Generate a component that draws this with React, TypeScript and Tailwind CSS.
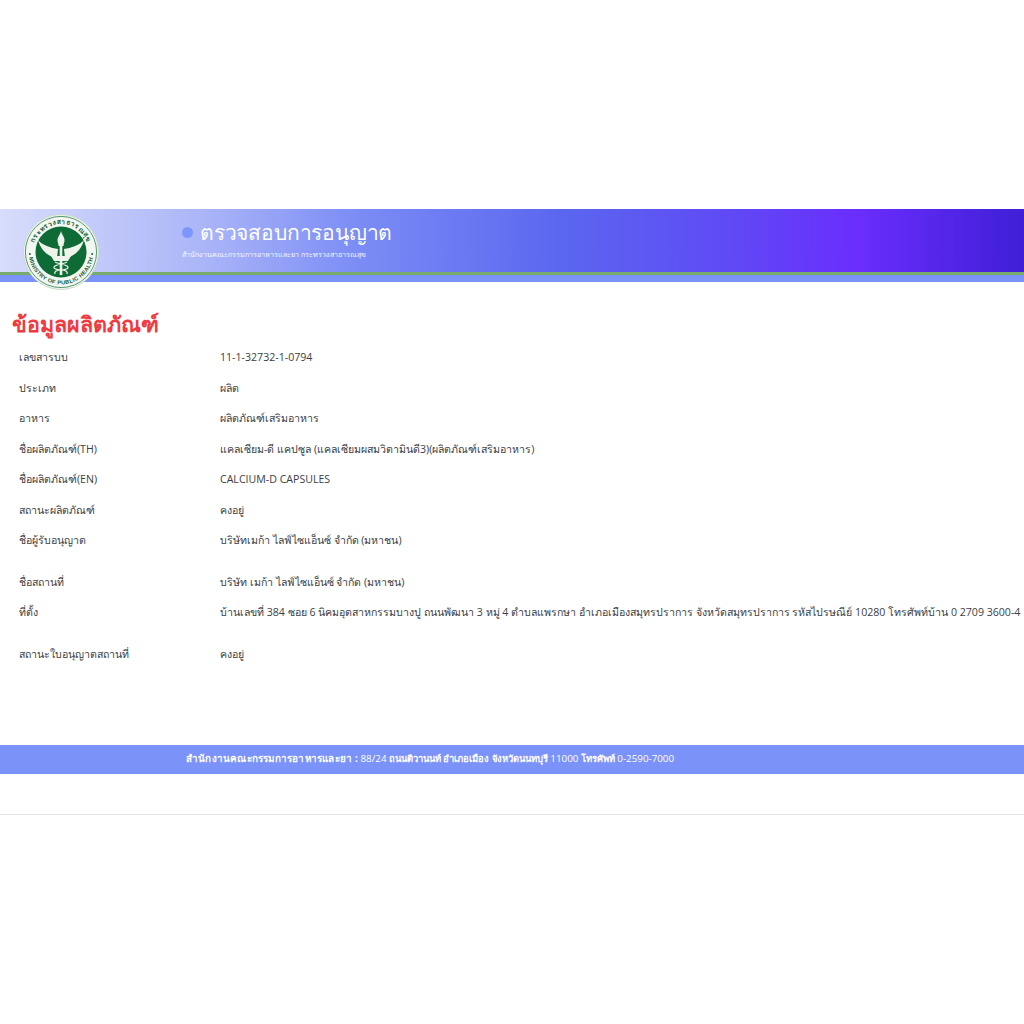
const bodyFont = "font-['Open_Sans','Noto_Sans','Liberation_Sans',sans-serif]";

const productRows = [
  ["เลขสารบบ", "11-1-32732-1-0794"],
  ["ประเภท", "ผลิต"],
  ["อาหาร", "ผลิตภัณฑ์เสริมอาหาร"],
  ["ชื่อผลิตภัณฑ์(TH)", "แคลเซียม-ดี แคปซูล (แคลเซียมผสมวิตามินดี3)(ผลิตภัณฑ์เสริมอาหาร)"],
  ["ชื่อผลิตภัณฑ์(EN)", "CALCIUM-D CAPSULES"],
  ["สถานะผลิตภัณฑ์", "คงอยู่"],
  ["ชื่อผู้รับอนุญาต", "บริษัทเมก้า ไลฟ์ไซแอ็นซ์ จำกัด (มหาชน)"],
];

const placeRows = [
  ["ชื่อสถานที่", "บริษัท เมก้า ไลฟ์ไซแอ็นซ์ จำกัด (มหาชน)"],
  [
    "ที่ตั้ง",
    "บ้านเลขที่ 384 ซอย 6 นิคมอุตสาหกรรมบางปู ถนนพัฒนา 3 หมู่ 4 ตำบลแพรกษา อำเภอเมืองสมุทรปราการ จังหวัดสมุทรปราการ รหัสไปรษณีย์ 10280 โทรศัพท์บ้าน 0 2709 3600-4",
  ],
];

function Row({ label, value }: { label: string; value: string }) {
  return (
    <div className="flex h-[30.5px] items-center text-[10.6px] text-[#3a4046]">
      <div className="w-[201px] shrink-0">{label}</div>
      <div className="whitespace-nowrap">{value}</div>
    </div>
  );
}

function Logo() {
  return (
    <svg viewBox="0 0 76 76" className="absolute left-[23px] top-[5px] h-[76px] w-[76px]">
      <circle cx="38" cy="38" r="37.5" fill="#f3f7f1" stroke="#c9dccb" />
      <circle cx="38" cy="38" r="35.6" fill="none" stroke="#2f7d52" strokeWidth="0.8" />
      <circle cx="38" cy="38" r="25.5" fill="#0f6b36" />
      <defs>
        <path id="topArc" d="M10 38a28 28 0 0 1 56 0" />
        <path id="bottomArc" d="M5.500 38a32.500 32.500 0 0 0 65 0" />
      </defs>
      <text fontSize="6.6" fontWeight="700" fill="#17603a" fontFamily="'Noto Sans','Liberation Sans',sans-serif" letterSpacing="0.5">
        <textPath href="#topArc" startOffset="50%" textAnchor="middle">กระทรวงสาธารณสุข</textPath>
      </text>
      <text fontSize="5.6" fontWeight="700" fill="#17603a" fontFamily="'Liberation Sans',sans-serif" letterSpacing="0.35">
        <textPath href="#bottomArc" startOffset="50%" textAnchor="middle">MINISTRY OF PUBLIC HEALTH</textPath>
      </text>
      <circle cx="6.800" cy="40" r="1" fill="#17603a" />
      <circle cx="69.200" cy="40" r="1" fill="#17603a" />
      {/* caduceus */}
      <path d="M38 17c1 4 3.500 6 3.500 9s-1 3-1 6h-5c0-3-1-3-1-6s2.500-5 3.500-9z" fill="#eef4ea" />
      <path d="M15 26c4 5 13 8 20 9l-1 9c-8-1-16-7-19-18zM61 26c-4 5-13 8-20 9l1 9c8-1 16-7 19-18z" fill="#eef4ea" />
      <path d="M28 42h20l-3 5H31z" fill="#eef4ea" />
      <rect x="36.700" y="30" width="2.600" height="31" fill="#eef4ea" />
      <path d="M32 48c3 2 9 2 12 4s-1 4-6 4-7 2-6 4M44 48c-3 2-9 2-12 4s1 4 6 4 7 2 6 4" fill="none" stroke="#eef4ea" strokeWidth="1.200" />
    </svg>
  );
}

export default function App() {
  return (
    <div className={`min-h-[1024px] bg-white pt-[209px] ${bodyFont}`}>
      {/* HEADER */}
      <header className="relative h-[73px]">
        <div className="flex h-[63px] flex-col bg-[linear-gradient(90deg,#d8ddfb_0%,#aab5f8_20%,#7b8cf5_35%,#5b66ef_55%,#5f4cf5_70%,#6a2dfd_84%,#3f1fd6_100%)] pl-[182px] pt-[9px]">
          <div className="flex items-center gap-[7px] text-white">
            <span className="h-[11px] w-[11px] rounded-full bg-[#7c96fb]" />
            <span className="text-[21px] leading-[28px] font-[550] tracking-[-0.18px]">ตรวจสอบการอนุญาต</span>
          </div>
          <div className="mt-[2px] text-[7.2px] leading-[12px] text-white/90">
            สำนักงานคณะกรรมการอาหารและยา กระทรวงสาธารณสุข
          </div>
        </div>
        <div className="h-[3px] bg-[#76ab6b]" />
        <div className="h-[7px] bg-[#7b93f8]" />
        <Logo />
      </header>

      {/* CONTENT */}
      <main className="pt-[28px]">
        <h1 className="pl-[12px] text-[21.5px] leading-[28px] font-semibold text-[#ee3a40]">ข้อมูลผลิตภัณฑ์</h1>
        <div className="pl-[19px] pt-[5px]">
          {productRows.map(([label, value]) => (
            <Row key={label} label={label} value={value} />
          ))}
          <div className="h-[11px]" />
          {placeRows.map(([label, value]) => (
            <Row key={label} label={label} value={value} />
          ))}
          <div className="h-[11px]" />
          <Row label="สถานะใบอนุญาตสถานที่" value="คงอยู่" />
        </div>
      </main>

      {/* FOOTER */}
      <footer className="mt-[75px]">
        <div className="flex h-[29px] items-center bg-[#7b93f8] pl-[186px] text-[9.8px] text-white">
          <b className="tracking-[0.2px]">สำนักงานคณะกรรมการอาหารและยา :</b>&nbsp;88/24 <b className="text-[9.4px]">&nbsp;ถนนติวานนท์ อำเภอเมือง จังหวัดนนทบุรี</b>&nbsp;11000 <b className="text-[9.4px]">&nbsp;โทรศัพท์</b>&nbsp;0-2590-7000
        </div>
        <div className="mt-[40px] h-px bg-[#e4e4e4]" />
      </footer>
    </div>
  );
}
